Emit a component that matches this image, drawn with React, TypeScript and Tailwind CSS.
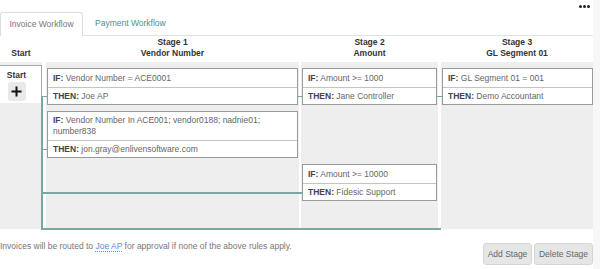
import type { ReactNode } from 'react'

type Rule = {
  cond: ReactNode
  then: string
  tall?: boolean
}

function RuleCard({ rule, className = '' }: { rule: Rule; className?: string }) {
  return (
    <div className={`bg-white border border-[#9a9a9a] ${className}`}>
      <div
        className={
          rule.tall
            ? 'px-[5px] py-[3px] leading-[11px] h-[28px]'
            : 'px-[5px] h-[18px] flex items-center'
        }
      >
        <span>
          <span className="font-bold text-[#444]">IF:</span> {rule.cond}
        </span>
      </div>
      <div className="border-t border-[#c4c4c4] px-[5px] h-[17px] flex items-center">
        <span>
          <span className="font-bold text-[#444]">THEN:</span> {rule.then}
        </span>
      </div>
    </div>
  )
}

function StageHeader({ stage, field, width, className = '' }: { stage: string; field: string; width: string; className?: string }) {
  return (
    <div className={`${width} ${className} text-center font-bold text-[#333] leading-[11px] pt-[1px]`}>
      <div>{stage}</div>
      <div>{field}</div>
    </div>
  )
}

export default function App() {
  return (
    <div
      className="w-[600px] h-[269px] overflow-hidden bg-white flex text-[8.5px] text-[#666]"
      style={{ fontFamily: '"Liberation Sans", Arial, sans-serif' }}
    >
      <div className="w-[593px] flex flex-col">
        {/* Top dots */}
        <div className="h-[12px] flex justify-end items-center pr-[3px]">
          <div className="flex gap-[1px]">
            <span className="w-[3px] h-[3px] rounded-full bg-[#222]" />
            <span className="w-[3px] h-[3px] rounded-full bg-[#222]" />
            <span className="w-[3px] h-[3px] rounded-full bg-[#222]" />
          </div>
        </div>

        {/* Tabs */}
        <div className="h-[24px] border-b border-[#e2e2e2] flex items-stretch">
          <div className="w-[83px] -mb-px border border-[#dcdcdc] border-b-white rounded-t-[3px] bg-white flex items-center justify-center text-[#777]">
            Invoice Workflow
          </div>
          <div className="ml-[12px] flex items-center text-[#4f8f8c]">Payment Workflow</div>
        </div>

        {/* Column headers */}
        <div className="h-[26px] flex">
          <div className="w-[42px] text-center font-bold text-[#333] leading-[11px] pt-[12px]">Start</div>
          <StageHeader stage="Stage 1" field="Vendor Number" width="w-[253px]" className="ml-[4px]" />
          <StageHeader stage="Stage 2" field="Amount" width="w-[137px]" className="ml-[2px]" />
          <StageHeader stage="Stage 3" field="GL Segment 01" width="w-[152px]" className="ml-[3px]" />
        </div>

        {/* Stage columns */}
        <div className="relative h-[167px] flex">
          <div className="w-[42px] bg-[#eeeeee]">
            <div className="mt-[3px] h-[38px] bg-white border-t border-r border-[#a8a8a8] flex flex-col items-center">
              <div className="font-bold text-[#333] leading-[10px] mt-[4px] -ml-[8px]">Start</div>
              <button className="mt-[2px] -ml-[8px] w-[18px] h-[19px] rounded-[3px] bg-[#e9e9e9] flex items-center justify-center">
                <svg width="11" height="11" viewBox="0 0 11 11">
                  <path d="M5.5 0.5v10M0.5 5.5h10" stroke="#111" strokeWidth="2" />
                </svg>
              </button>
            </div>
          </div>

          <div className="ml-[4px] w-[253px] bg-[#eeeeee] px-[1px] pt-[6px] flex flex-col">
            <RuleCard rule={{ cond: 'Vendor Number = ACE0001', then: 'Joe AP' }} />
            <RuleCard
              className="mt-[6px]"
              rule={{
                cond: (
                  <>
                    Vendor Number In ACE001; vendor0188; nadnie01;
                    <br />
                    number838
                  </>
                ),
                then: 'jon.gray@enlivensoftware.com',
                tall: true,
              }}
            />
          </div>

          <div className="ml-[2px] w-[137px] bg-[#eeeeee] px-[1px] pt-[6px] flex flex-col">
            <RuleCard rule={{ cond: 'Amount >= 1000', then: 'Jane Controller' }} />
            <RuleCard className="mt-[59px]" rule={{ cond: 'Amount >= 10000', then: 'Fidesic Support' }} />
          </div>

          <div className="ml-[3px] w-[152px] bg-[#eeeeee] pl-[1px] pt-[6px] flex flex-col">
            <RuleCard rule={{ cond: 'GL Segment 01 = 001', then: 'Demo Accountant' }} />
          </div>

          {/* Connector lines */}
          <div className="absolute left-[41px] top-[34px] w-[2px] h-[134px] bg-[#7aa6a4]" />
          <div className="absolute left-[41px] top-[166px] w-[400px] h-[2px] bg-[#7aa6a4]" />
          <div className="absolute left-[41px] top-[130px] w-[261px] h-[1.5px] bg-[#7aa6a4]" />
          <div className="absolute left-[42px] top-[34px] w-[5px] h-px bg-[#7aa6a4]" />
          <div className="absolute left-[42px] top-[87px] w-[5px] h-px bg-[#7aa6a4]" />
          <div className="absolute left-[298px] top-[34px] w-[4px] h-px bg-[#7aa6a4]" />
          <div className="absolute left-[437px] top-[34px] w-[5px] h-px bg-[#7aa6a4]" />
        </div>

        {/* Footer */}
        <div className="flex justify-between items-start pt-[12px]">
          <div className="leading-[11px] text-[#777]">
            Invoices will be routed to{' '}
            <span className="text-[#5b8fd6] border-b border-dotted border-[#5b8fd6]">Joe AP</span> for approval if none of
            the above rules apply.
          </div>
          <div className="mt-[2px] flex gap-[2px]">
            <button className="h-[22px] w-[49px] bg-[#e6e6e6] border border-[#d6d6d6] rounded-[3px] text-[#666]">
              Add Stage
            </button>
            <button className="h-[22px] w-[59px] bg-[#e6e6e6] border border-[#d6d6d6] rounded-[3px] text-[#666]">
              Delete Stage
            </button>
          </div>
        </div>
      </div>
      <div className="w-[7px] bg-[#f7f7f7]" />
    </div>
  )
}
